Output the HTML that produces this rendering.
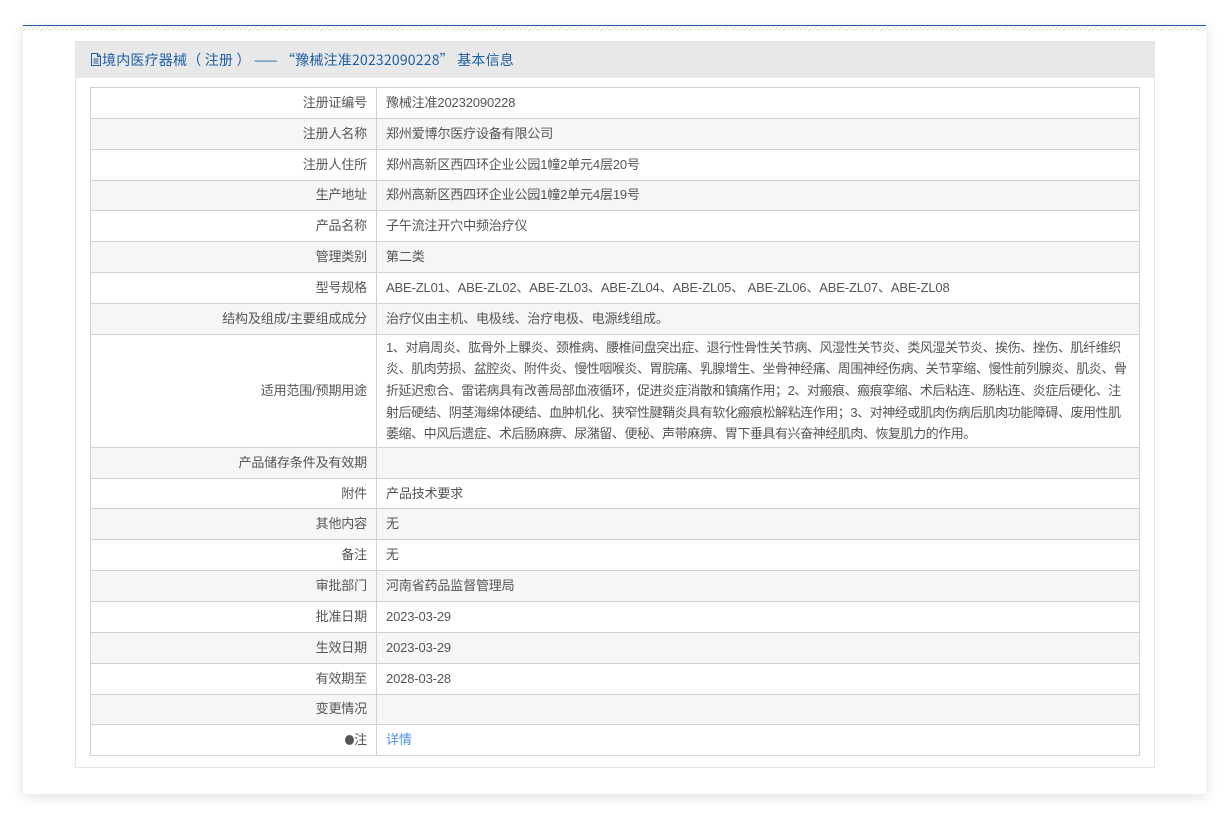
<!DOCTYPE html>
<html><head><meta charset="utf-8"><style>
*{margin:0;padding:0;box-sizing:border-box}
body{width:1229px;height:817px;background:#fff;font-family:"Liberation Sans","Noto Sans CJK SC",sans-serif;font-size:13px;color:#555;position:relative;overflow:hidden}
.outer{position:absolute;left:23px;top:25px;width:1183px;height:769px;background:#fff;border-top:1px solid #1e5fa8;box-shadow:0 3px 12px rgba(0,0,0,.12)}
.stripe{height:5px;background:repeating-linear-gradient(135deg,#e2e2e2 0 1px,#fff 1px 3px)}
.panel{position:absolute;left:52px;top:15px;width:1080px;height:727px;border:1px solid #e5e5e5;background:#fff}
.hd{height:36px;background:#e8e8e8;color:#1e5fa8;font-size:14px;line-height:36px;padding-left:14px;font-family:"Noto Sans CJK SC",sans-serif;letter-spacing:0.2px}
table{position:absolute;left:14px;top:45px;width:1050px;border-collapse:collapse;table-layout:fixed;border:1px solid #d0d0d0}
td{border:1px solid #d0d0d0;height:30.85px;padding:0 9px;line-height:22px;letter-spacing:-0.15px}
td.l{width:286px;text-align:right}
tr:nth-child(even) td{background:#f6f6f6}
a{color:#4a90e2;text-decoration:none}
.m{white-space:nowrap;line-height:21.6px;padding:2px 4px 2px 9px;letter-spacing:-0.45px}
</style></head><body>
<div class="outer"><div class="stripe"></div>
<div class="panel">
<div class="hd"><svg width="12" height="13" viewBox="0 0 12 13" style="vertical-align:-1px"><path d="M1.5 .5h6l3 3v9h-9z M7.5 .5v3h3 M3.5 6h5 M3.5 8h5 M3.5 10h5" fill="none" stroke="#1e5fa8"/></svg>境内医疗器械（ 注册 ） —— “豫械注准20232090228” 基本信息</div>
<table>
<tr><td class="l">注册证编号</td><td>豫械注准20232090228</td></tr>
<tr><td class="l">注册人名称</td><td>郑州爱博尔医疗设备有限公司</td></tr>
<tr><td class="l">注册人住所</td><td>郑州高新区西四环企业公园1幢2单元4层20号</td></tr>
<tr><td class="l">生产地址</td><td>郑州高新区西四环企业公园1幢2单元4层19号</td></tr>
<tr><td class="l">产品名称</td><td>子午流注开穴中频治疗仪</td></tr>
<tr><td class="l">管理类别</td><td>第二类</td></tr>
<tr><td class="l">型号规格</td><td>ABE-ZL01、ABE-ZL02、ABE-ZL03、ABE-ZL04、ABE-ZL05、 ABE-ZL06、ABE-ZL07、ABE-ZL08</td></tr>
<tr><td class="l">结构及组成/主要组成成分</td><td>治疗仪由主机、电极线、治疗电极、电源线组成。</td></tr>
<tr><td class="l" style="height:113px">适用范围/预期用途</td><td class="m">1、对肩周炎、肱骨外上髁炎、颈椎病、腰椎间盘突出症、退行性骨性关节病、风湿性关节炎、类风湿关节炎、挨伤、挫伤、肌纤维织<br>炎、肌肉劳损、盆腔炎、附件炎、慢性咽喉炎、胃脘痛、乳腺增生、坐骨神经痛、周围神经伤病、关节挛缩、慢性前列腺炎、肌炎、骨<br>折延迟愈合、雷诺病具有改善局部血液循环，促进炎症消散和镇痛作用；2、对瘢痕、瘢痕挛缩、术后粘连、肠粘连、炎症后硬化、注<br>射后硬结、阴茎海绵体硬结、血肿机化、狭窄性腱鞘炎具有软化瘢痕松解粘连作用；3、对神经或肌肉伤病后肌肉功能障碍、废用性肌<br>萎缩、中风后遗症、术后肠麻痹、尿潴留、便秘、声带麻痹、胃下垂具有兴奋神经肌肉、恢复肌力的作用。</td></tr>
<tr><td class="l">产品储存条件及有效期</td><td></td></tr>
<tr><td class="l">附件</td><td>产品技术要求</td></tr>
<tr><td class="l">其他内容</td><td>无</td></tr>
<tr><td class="l">备注</td><td>无</td></tr>
<tr><td class="l">审批部门</td><td>河南省药品监督管理局</td></tr>
<tr><td class="l">批准日期</td><td>2023-03-29</td></tr>
<tr><td class="l">生效日期</td><td>2023-03-29</td></tr>
<tr><td class="l">有效期至</td><td>2028-03-28</td></tr>
<tr><td class="l">变更情况</td><td></td></tr>
<tr><td class="l"><span style="display:inline-block;width:9px;height:10px;border-radius:50%;background:#555;vertical-align:-1px"></span>注</td><td><a>详情</a></td></tr>
</table>
</div></div>
</body></html>
